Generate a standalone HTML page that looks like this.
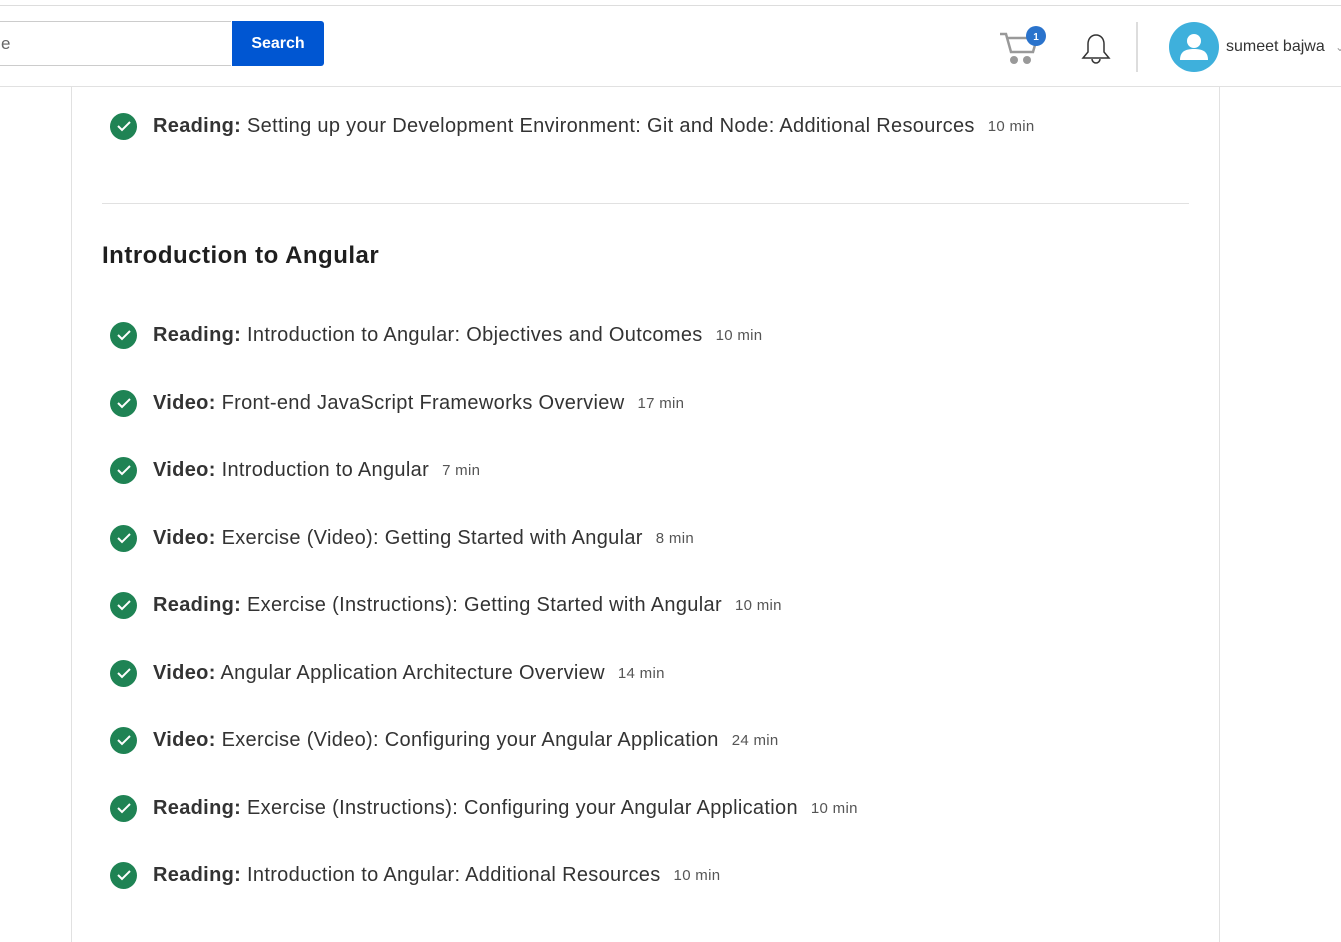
<!DOCTYPE html>
<html><head><meta charset="utf-8"><style>
body{margin:0;width:1341px;height:942px;overflow:hidden;background:#fff;font-family:"Liberation Sans",sans-serif;position:relative;color:#1f1f1f}
.topline{position:absolute;left:0;top:5px;width:1341px;height:1px;background:#ddd}
.header{position:absolute;left:0;top:86px;width:1341px;height:1px;background:#e1e1e1}
.input{position:absolute;left:-2px;top:21px;width:233px;height:45px;border:1px solid #ccc;box-sizing:border-box;border-right:none}
.input span{position:absolute;left:2px;top:12px;font-size:17px;color:#666}
.btn{position:absolute;left:232px;top:21px;width:92px;height:45px;background:#0056d2;border-radius:0 3px 3px 0;color:#fff;font-weight:bold;font-size:16px;text-align:center;line-height:45px}
.vl{position:absolute;top:87px;width:1px;height:855px;background:#e1e1e1}
.row{position:absolute;left:110px;height:28px;display:flex;align-items:center;white-space:nowrap}
.chk{width:27px;height:27px;border-radius:50%;background:#1f8354;margin-right:16px;display:flex;align-items:center;justify-content:center}
.t{font-size:20px;color:#333;letter-spacing:0.32px}
.t b{color:#333}
.d{font-size:15px;color:#555;margin-left:13px;letter-spacing:0.3px}
h2{position:absolute;left:102px;top:242px;margin:0;font-size:24px;font-weight:bold;color:#1f1f1f;letter-spacing:0.5px}
</style></head><body>
<div class="topline"></div>
<div class="input"><span>e</span></div>
<div class="btn">Search</div>
<svg style="position:absolute;left:999px;top:24px" width="48" height="44" viewBox="0 0 48 44"><path d="M1 10h6l5 18h22l4-14H9" fill="none" stroke="#999" stroke-width="2.5"/><circle cx="15" cy="36" r="4" fill="#999"/><circle cx="28" cy="36" r="4" fill="#999"/><circle cx="37" cy="12" r="10" fill="#2a73cc"/><text x="37" y="16" font-size="10" font-weight="bold" fill="#fff" text-anchor="middle" font-family="Liberation Sans">1</text></svg>
<svg style="position:absolute;left:1080px;top:33px" width="32" height="34" viewBox="0 0 32 34"><path d="M16 2c-5 0-8 4-8 9v8l-5 6h26l-5-6v-8c0-5-3-9-8-9z" fill="none" stroke="#333" stroke-width="1.5"/><path d="M12 26a4 4 0 0 0 8 0" fill="none" stroke="#333" stroke-width="1.5"/></svg>
<div style="position:absolute;left:1136px;top:22px;width:2px;height:50px;background:#ddd"></div>
<svg style="position:absolute;left:1169px;top:22px" width="50" height="50" viewBox="0 0 50 50"><circle cx="25" cy="25" r="25" fill="#3eb0dc"/><circle cx="25" cy="19" r="7" fill="#fff"/><path d="M11 38c0-9 6-11 14-11s14 2 14 11z" fill="#fff"/></svg>
<div style="position:absolute;left:1226px;top:38px;font-size:16px;color:#333">sumeet bajwa</div>
<div style="position:absolute;left:1335px;top:40px;font-size:12px;color:#999">⌄</div>
<div class="header"></div>
<div class="vl" style="left:71px"></div>
<div class="vl" style="left:1219px"></div>
<div style="position:absolute;left:102px;top:203px;width:1087px;height:1px;background:#e1e1e1"></div>
<h2>Introduction to Angular</h2>

<div class="row" style="top:112px"><div class="chk"><svg width="14" height="11"><path d="M1 5l4 4 8-8" fill="none" stroke="#fff" stroke-width="2"/></svg></div><span class="t"><b>Reading:</b> Setting up your Development Environment: Git and Node: Additional Resources</span><span class="d">10 min</span></div>
<div class="row" style="top:321px"><div class="chk"><svg width="14" height="11"><path d="M1 5l4 4 8-8" fill="none" stroke="#fff" stroke-width="2"/></svg></div><span class="t"><b>Reading:</b> Introduction to Angular: Objectives and Outcomes</span><span class="d">10 min</span></div>
<div class="row" style="top:389px"><div class="chk"><svg width="14" height="11"><path d="M1 5l4 4 8-8" fill="none" stroke="#fff" stroke-width="2"/></svg></div><span class="t"><b>Video:</b> Front-end JavaScript Frameworks Overview</span><span class="d">17 min</span></div>
<div class="row" style="top:456px"><div class="chk"><svg width="14" height="11"><path d="M1 5l4 4 8-8" fill="none" stroke="#fff" stroke-width="2"/></svg></div><span class="t"><b>Video:</b> Introduction to Angular</span><span class="d">7 min</span></div>
<div class="row" style="top:524px"><div class="chk"><svg width="14" height="11"><path d="M1 5l4 4 8-8" fill="none" stroke="#fff" stroke-width="2"/></svg></div><span class="t"><b>Video:</b> Exercise (Video): Getting Started with Angular</span><span class="d">8 min</span></div>
<div class="row" style="top:591px"><div class="chk"><svg width="14" height="11"><path d="M1 5l4 4 8-8" fill="none" stroke="#fff" stroke-width="2"/></svg></div><span class="t"><b>Reading:</b> Exercise (Instructions): Getting Started with Angular</span><span class="d">10 min</span></div>
<div class="row" style="top:659px"><div class="chk"><svg width="14" height="11"><path d="M1 5l4 4 8-8" fill="none" stroke="#fff" stroke-width="2"/></svg></div><span class="t"><b>Video:</b> Angular Application Architecture Overview</span><span class="d">14 min</span></div>
<div class="row" style="top:726px"><div class="chk"><svg width="14" height="11"><path d="M1 5l4 4 8-8" fill="none" stroke="#fff" stroke-width="2"/></svg></div><span class="t"><b>Video:</b> Exercise (Video): Configuring your Angular Application</span><span class="d">24 min</span></div>
<div class="row" style="top:794px"><div class="chk"><svg width="14" height="11"><path d="M1 5l4 4 8-8" fill="none" stroke="#fff" stroke-width="2"/></svg></div><span class="t"><b>Reading:</b> Exercise (Instructions): Configuring your Angular Application</span><span class="d">10 min</span></div>
<div class="row" style="top:861px"><div class="chk"><svg width="14" height="11"><path d="M1 5l4 4 8-8" fill="none" stroke="#fff" stroke-width="2"/></svg></div><span class="t"><b>Reading:</b> Introduction to Angular: Additional Resources</span><span class="d">10 min</span></div>
</body></html>
